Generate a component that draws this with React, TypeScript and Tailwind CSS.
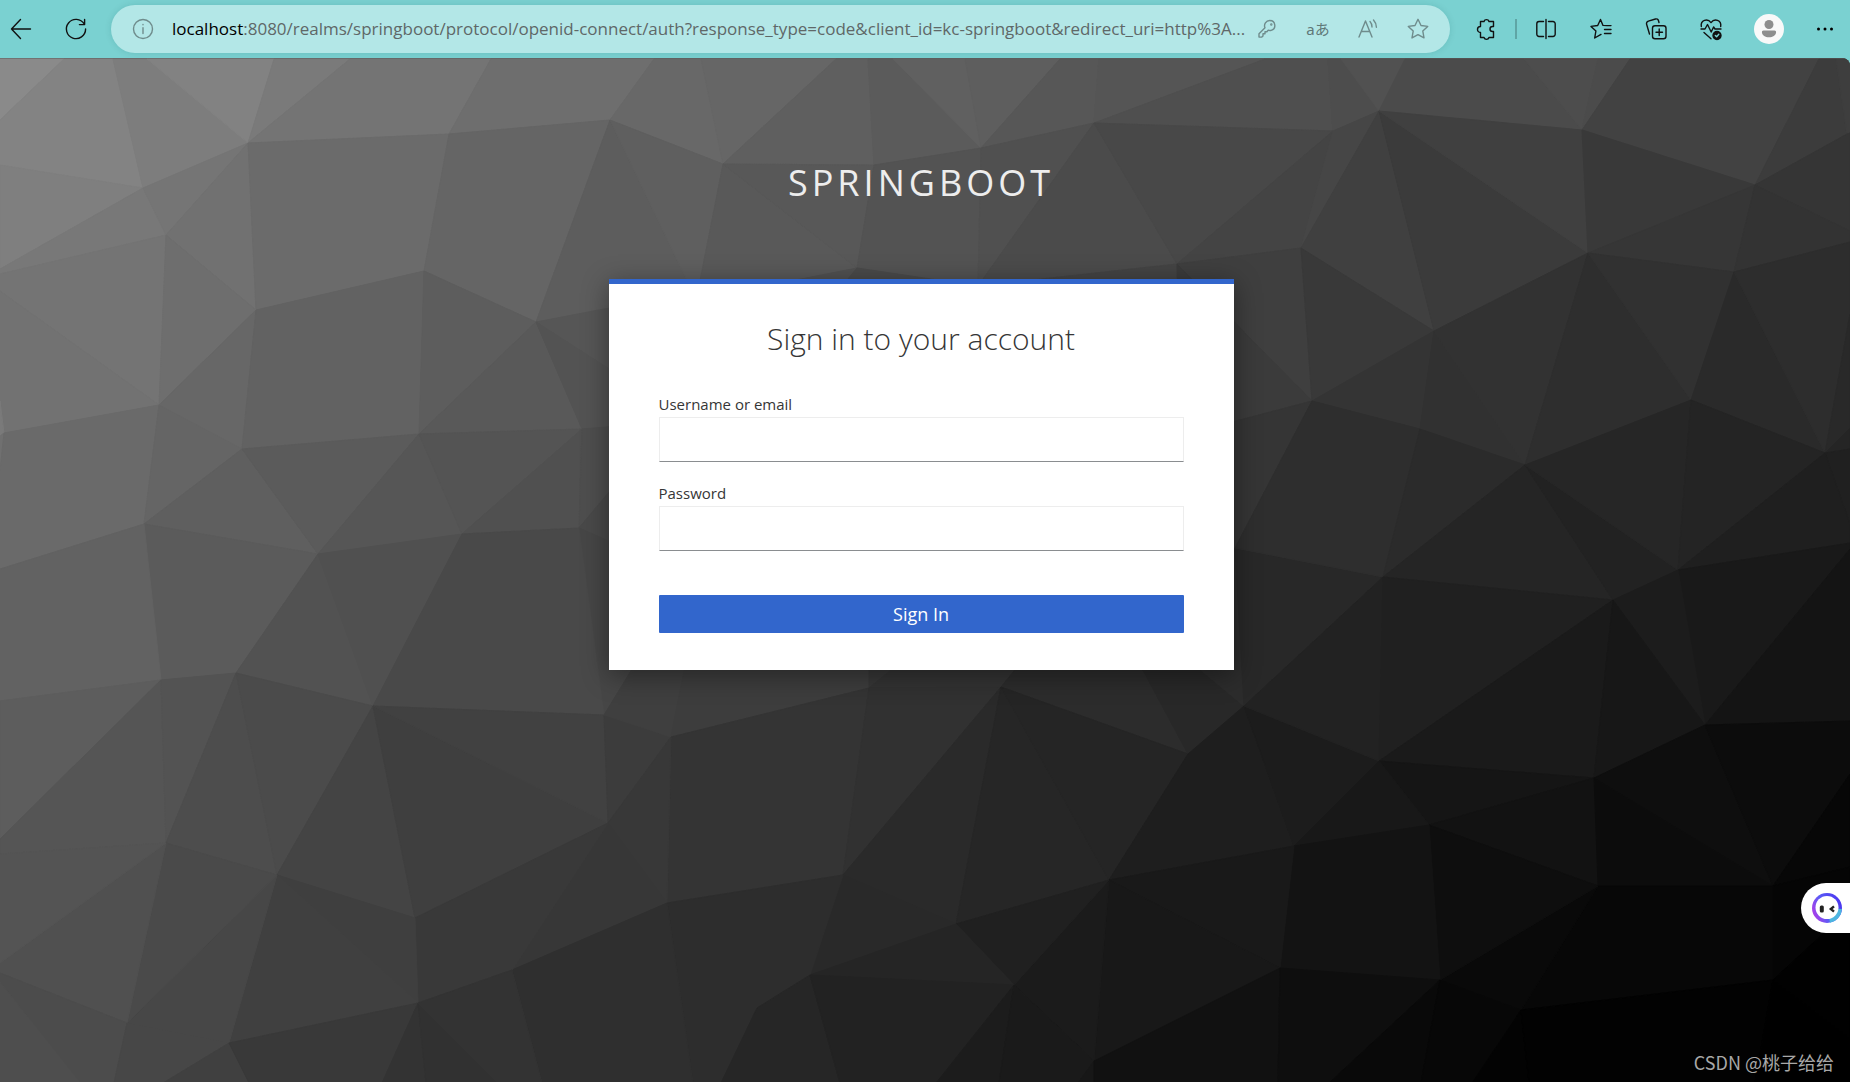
import { ReactNode } from "react";

// [fill, points] for every facet of the backdrop
const facets: [string, string][] = [
  ["#8a8a8a", "0,58 64,58 0,119"],
  ["#838383", "64,58 113,58 143,187 0,164 0,119"],
  ["#7d7d7d", "113,58 147,58 248,142 143,187"],
  ["#828282", "147,58 274,58 248,142"],
  ["#7a7a7a", "274,58 350,58 248,142"],
  ["#747474", "350,58 491,58 449,133 248,142"],
  ["#6e6e6e", "491,58 654,58 610,119 449,133"],
  ["#686868", "654,58 701,58 723,163 610,119"],
  ["#666666", "701,58 836,58 723,163"],
  ["#5f5f5f", "836,58 868,58 874,164 723,163"],
  ["#5b5b5b", "868,58 893,58 981,147 874,164"],
  ["#606060", "893,58 965,58 981,147"],
  ["#5e5e5e", "965,58 1060,58 981,147"],
  ["#575757", "1060,58 1099,58 1094,122 981,147"],
  ["#555555", "1099,58 1265,58 1094,122"],
  ["#4f4f4f", "1265,58 1328,58 1333,130 1094,122"],
  ["#4d4d4d", "1328,58 1341,58 1379,110 1333,130"],
  ["#515151", "1341,58 1405,58 1379,110"],
  ["#4b4b4b", "1405,58 1524,58 1582,129 1379,110"],
  ["#4d4d4d", "1524,58 1598,58 1582,129"],
  ["#4b4b4b", "1598,58 1630,58 1582,129"],
  ["#424242", "1630,58 1819,58 1755,184 1582,129"],
  ["#3c3c3c", "1819,58 1836,58 1847,133 1755,184"],
  ["#3e3e3e", "1836,58 1850,58 1850,132 1847,133"],
  ["#7f7f7f", "0,164 143,187 0,268"],
  ["#787878", "0,268 143,187 166,234 0,273"],
  ["#757575", "143,187 248,142 166,234"],
  ["#717171", "248,142 256,309 166,234"],
  ["#6b6b6b", "248,142 449,133 424,270 256,309"],
  ["#656565", "449,133 610,119 536,321 424,270"],
  ["#5d5d5d", "610,119 692,290 536,321"],
  ["#5f5f5f", "610,119 723,163 698,290 692,290"],
  ["#595959", "723,163 857,267 785,290 698,290"],
  ["#585858", "723,163 874,164 857,267"],
  ["#535353", "874,164 981,147 978,285 857,267"],
  ["#505050", "981,147 1094,122 978,285"],
  ["#4b4b4b", "1094,122 1177,263 978,285"],
  ["#484848", "1094,122 1333,130 1177,263"],
  ["#444444", "1333,130 1301,247 1177,263"],
  ["#464646", "1333,130 1379,110 1301,247"],
  ["#404040", "1379,110 1434,330 1301,247"],
  ["#3b3b3b", "1379,110 1588,252 1434,330"],
  ["#404040", "1379,110 1582,129 1588,252"],
  ["#393939", "1582,129 1755,184 1588,252"],
  ["#363636", "1755,184 1734,271 1588,252"],
  ["#353535", "1755,184 1847,133 1850,132 1850,230"],
  ["#333333", "1755,184 1850,230 1850,241 1734,271"],
  ["#747474", "0,273 166,234 159,404 0,290"],
  ["#727272", "0,290 159,404 4,432 0,400"],
  ["#6e6e6e", "166,234 256,309 159,404"],
  ["#676767", "256,309 242,448 159,404"],
  ["#626262", "256,309 424,270 419,433 242,448"],
  ["#5d5d5d", "424,270 536,321 419,433"],
  ["#595959", "536,321 582,428 419,433"],
  ["#565656", "536,321 620,305 620,375"],
  ["#535353", "536,321 620,375 620,425 582,428"],
  ["#515151", "770,284 857,267 838,290"],
  ["#4a4a4a", "838,290 857,267 978,285 978,295"],
  ["#444444", "978,285 1177,263 1179,295"],
  ["#3f3f3f", "1177,263 1301,247 1312,400"],
  ["#3b3b3b", "1177,263 1312,400 1179,435"],
  ["#393939", "1301,247 1434,330 1312,400"],
  ["#343434", "1434,330 1420,428 1312,400"],
  ["#313131", "1434,330 1525,464 1420,428"],
  ["#323232", "1434,330 1588,252 1525,464"],
  ["#2e2e2e", "1588,252 1691,399 1525,464"],
  ["#313131", "1588,252 1734,271 1691,399"],
  ["#2a2a2a", "1734,271 1825,452 1691,399"],
  ["#2d2d2d", "1734,271 1850,241 1850,313 1825,452"],
  ["#292929", "1850,313 1850,427 1825,452"],
  ["#252525", "1850,427 1850,448 1825,452"],
  ["#202020", "1825,452 1850,448 1850,523"],
  ["#7a7a7a", "0,400 4,432 0,435"],
  ["#707070", "0,435 4,432 0,470"],
  ["#6a6a6a", "4,432 159,404 144,523 0,568 0,470"],
  ["#656565", "159,404 242,448 144,523"],
  ["#5f5f5f", "242,448 318,553 144,523"],
  ["#5b5b5b", "242,448 419,433 318,553"],
  ["#565656", "419,433 462,533 318,553"],
  ["#545454", "419,433 582,428 462,533"],
  ["#505050", "582,428 579,527 462,533"],
  ["#4e4e4e", "582,428 620,425 620,478 579,527"],
  ["#494949", "579,527 620,478 620,545"],
  ["#464646", "579,527 620,545 637,670 604,714"],
  ["#5b5b5b", "144,523 318,553 236,672 161,679"],
  ["#626262", "0,568 144,523 161,679 0,700"],
  ["#525252", "318,553 373,705 236,672"],
  ["#505050", "318,553 462,533 373,705"],
  ["#494949", "462,533 579,527 604,714 373,705"],
  ["#353535", "1179,435 1312,400 1235,547 1179,560"],
  ["#5d5d5d", "0,700 161,679 0,838"],
  ["#555555", "161,679 166,842 0,853 0,838"],
  ["#535353", "161,679 236,672 166,842"],
  ["#4d4d4d", "236,672 277,874 166,842"],
  ["#4b4b4b", "236,672 373,705 277,874"],
  ["#444444", "373,705 415,917 277,874"],
  ["#3f3f3f", "373,705 608,822 415,917"],
  ["#414141", "373,705 604,714 608,822"],
  ["#3c3c3c", "604,714 671,736 608,822"],
  ["#3f3f3f", "604,714 637,660 686,660 671,736"],
  ["#3d3d3d", "671,736 686,660 869,660 869,687"],
  ["#373737", "869,660 902,660 869,687"],
  ["#333333", "902,660 1022,660 1001,686 869,687"],
  ["#2c2c2c", "1022,660 1138,660 1188,753 1001,686"],
  ["#282828", "1138,660 1190,660 1244,705 1188,753"],
  ["#2c2c2c", "1190,660 1235,547 1244,705"],
  ["#282828", "1235,547 1383,576 1244,705"],
  ["#2e2e2e", "1235,547 1312,400 1420,428 1383,576"],
  ["#2b2b2b", "1420,428 1525,464 1383,576"],
  ["#252525", "1525,464 1613,599 1383,576"],
  ["#222222", "1525,464 1678,569 1613,599"],
  ["#262626", "1525,464 1691,399 1678,569"],
  ["#242424", "1691,399 1825,452 1678,569"],
  ["#1f1f1f", "1825,452 1850,523 1850,542 1678,569"],
  ["#191919", "1678,569 1850,542 1850,548 1705,724"],
  ["#141414", "1850,548 1850,720 1705,724"],
  ["#1c1c1c", "1678,569 1705,724 1613,599"],
  ["#343434", "671,736 869,687 843,874 667,902"],
  ["#383838", "671,736 667,902 608,822"],
  ["#313131", "869,687 1001,686 843,874"],
  ["#2a2a2a", "1001,686 956,923 843,874"],
  ["#262626", "1001,686 1109,879 956,923"],
  ["#252525", "1001,686 1188,753 1109,879"],
  ["#1e1e1e", "1188,753 1244,705 1294,845 1109,879"],
  ["#1c1c1c", "1244,705 1379,760 1294,845"],
  ["#222222", "1244,705 1383,576 1379,760"],
  ["#202020", "1383,576 1613,599 1379,760"],
  ["#1a1a1a", "1613,599 1594,777 1379,760"],
  ["#171717", "1613,599 1705,724 1594,777"],
  ["#151515", "1379,760 1594,777 1429,824"],
  ["#181818", "1379,760 1429,824 1294,845"],
  ["#121212", "1594,777 1598,885 1429,824"],
  ["#0e0e0e", "1705,724 1773,885 1594,777"],
  ["#0c0c0c", "1594,777 1773,885 1598,885"],
  ["#0c0c0c", "1705,724 1850,720 1850,773 1773,885"],
  ["#070707", "1850,773 1850,866 1773,885"],
  ["#050505", "1773,885 1850,866 1850,908 1773,979"],
  ["#070707", "1598,885 1773,885 1773,979 1521,1009"],
  ["#090909", "1598,885 1521,1009 1440,979"],
  ["#0e0e0e", "1429,824 1598,885 1440,979"],
  ["#131313", "1294,845 1429,824 1440,979 1280,967"],
  ["#191919", "1109,879 1294,845 1280,967"],
  ["#181818", "1109,879 1280,967 1094,1060"],
  ["#1b1b1b", "1109,879 1094,1060 1014,984"],
  ["#202020", "956,923 1109,879 1014,984"],
  ["#292929", "843,874 956,923 810,974"],
  ["#252525", "956,923 1014,984 810,974"],
  ["#2d2d2d", "667,902 843,874 810,974 757,1007 721,1082 693,1082"],
  ["#373737", "608,822 667,902 512,969"],
  ["#2f2f2f", "512,969 667,902 693,1082 542,1082"],
  ["#393939", "608,822 512,969 418,1002 415,917"],
  ["#3f3f3f", "277,874 415,917 418,1002"],
  ["#404040", "277,874 418,1002 229,1042"],
  ["#474747", "277,874 229,1042 127,1022"],
  ["#4a4a4a", "166,842 277,874 127,1022"],
  ["#505050", "166,842 127,1022 0,972 0,962"],
  ["#545454", "0,853 166,842 0,962"],
  ["#4c4c4c", "0,972 127,1022 114,1082 80,1082 0,981"],
  ["#4e4e4e", "0,981 80,1082 0,1082"],
  ["#474747", "127,1022 229,1042 163,1082 114,1082"],
  ["#404040", "229,1042 249,1082 163,1082"],
  ["#393939", "229,1042 418,1002 382,1082 249,1082"],
  ["#333333", "418,1002 426,1082 382,1082"],
  ["#313131", "418,1002 498,1082 426,1082"],
  ["#333333", "418,1002 512,969 542,1082 498,1082"],
  ["#262626", "757,1007 810,974 840,1082 721,1082"],
  ["#222222", "810,974 1014,984 936,1082 840,1082"],
  ["#1c1c1c", "1014,984 999,1082 936,1082"],
  ["#1a1a1a", "1014,984 1094,1060 1078,1082 999,1082"],
  ["#171717", "1094,1060 1094,1082 1078,1082"],
  ["#111111", "1094,1060 1280,967 1278,1082 1094,1082"],
  ["#0e0e0e", "1280,967 1440,979 1329,1082 1278,1082"],
  ["#090909", "1440,979 1421,1082 1329,1082"],
  ["#070707", "1440,979 1521,1009 1472,1082 1421,1082"],
  ["#030303", "1521,1009 1529,1082 1472,1082"],
  ["#020202", "1521,1009 1773,979 1755,1082 1529,1082"],
  ["#000000", "1773,979 1850,1037 1850,1082 1755,1082"],
  ["#010101", "1773,979 1850,908 1850,1037"],
];

function Backdrop() {
  return (
    <svg
      className="absolute inset-0 h-full w-full"
      viewBox="0 57 1850 1024"
      preserveAspectRatio="xMidYMid slice"
      aria-hidden="true"
    >
      <rect x="0" y="57" width="1850" height="1024" fill="#5a5a5a" />
      {facets.map(([fill, points]) => (
        <polygon key={points} points={points} fill={fill} stroke={fill} />
      ))}
    </svg>
  );
}

interface ToolProps {
  label: string;
  className: string;
  children: ReactNode;
}

function Tool({ label, className, children }: ToolProps) {
  return (
    <button
      type="button"
      aria-label={label}
      className={`flex h-10 shrink-0 items-center justify-center ${className}`}
    >
      {children}
    </button>
  );
}

function Icon({ children }: { children: ReactNode }) {
  return (
    <svg
      width="24"
      height="24"
      viewBox="0 0 24 24"
      fill="none"
      stroke="currentColor"
      strokeWidth="1.4"
      strokeLinecap="round"
      strokeLinejoin="round"
      aria-hidden="true"
    >
      {children}
    </svg>
  );
}

function Toolbar() {
  return (
    <header className="flex h-[58px] items-center text-[#111]">
      <Tool label="Back" className="w-[42px]">
        <Icon>
          <path d="M21.5 12H2.5M11.5 2.5L2.5 12l9 9.5" />
        </Icon>
      </Tool>
      <Tool label="Refresh" className="mr-0.5 w-[67px]">
        <Icon>
          <path d="M20.2 7A9.6 9.6 0 1 0 21.6 12M20.6 2.500V7.600H15.4" />
        </Icon>
      </Tool>

      <div className="flex h-12 min-w-0 flex-1 items-center rounded-full bg-[#b3e7e7] pr-[7px] pl-5 text-[#6f8c8c] shadow-[0_0_6px_rgba(0,80,80,0.15)]">
        <Tool label="View site information" className="mr-[17px]">
          <Icon>
            <circle cx="12" cy="12" r="9.5" />
            <path d="M12 10.8V16.5M12 7.5V7.8" />
          </Icon>
        </Tool>
        <p className="min-w-0 flex-1 truncate font-['Open_Sans',sans-serif] text-[17px] text-[#5f6868]">
          <span className="text-black">localhost</span>
          :8080/realms/springboot/protocol/openid-connect/auth?response_type=code&amp;client_id=kc-springboot&amp;redirect_uri=http%3A...
        </p>
        <Tool label="Saved passwords" className="mr-2 w-9">
          <Icon>
            <path d="M14.8 3.5a5 5 0 0 1 1.400 9.800c-1 .3-2 .3-3-.1l-1.300 1.500H10v2.100H8v2.100l-1.200 1.200H4v-3.300l6-6A5.200 5.200 0 0 1 14.800 3.500z" />
            <circle cx="16.3" cy="7.5" r="0.5" />
          </Icon>
        </Tool>
        <Tool label="Translate" className="w-[50px]">
          <span className="font-['Noto_Sans','Noto_Sans_CJK_JP',sans-serif] text-[15px] text-[#5f7878]">
            aあ
          </span>
        </Tool>
        <Tool label="Read aloud" className="w-[50px]">
          <Icon>
            <path d="M3 20L9.5 4L16 20M5.2 14.500H13.8M14 4.500c1.300 1.400 2 3.300 2 5.500M17.500 3c1.800 2 2.900 4.400 2.900 7.200" />
          </Icon>
        </Tool>
        <Tool label="Add to favorites" className="w-[50px]">
          <Icon>
            <path d="M12 2.300l3 6.200 6.700.9-4.900 4.700 1.200 6.800-6-3.300-6 3.300 1.200-6.800-4.900-4.700 6.700-.9z" />
          </Icon>
        </Tool>
      </div>

      <div className="flex items-center pl-2">
        <Tool label="Extensions" className="w-14">
          <Icon>
            <path d="M6.500 4.500H10a2.600 2.600 0 0 1 5 0h4.500v5h-1a2.500 2.500 0 0 0 0 5h1v6H15a2.600 2.600 0 0 1-5 0H6.500v-5a3 3 0 0 1 0-6z" />
          </Icon>
        </Tool>
        <div className="mx-px h-5 w-0.5 bg-[#5fa5a5]" />
        <Tool label="Split screen" className="w-[55px]">
          <Icon>
            <path d="M9.500 4.500H5a2.200 2.200 0 0 0-2.200 2.200v10.600A2.200 2.200 0 0 0 5 19.500h4.500M14.500 4.500H19a2.200 2.200 0 0 1 2.200 2.200v10.600a2.200 2.200 0 0 1-2.200 2.200h-4.500M12 2.500v19" />
          </Icon>
        </Tool>
        <Tool label="Favorites" className="w-[55px]">
          <Icon>
            <path d="M18 8.600L14 8.400L11.500 2.500L8.700 8.500L2 9.400L6.900 14L5.700 21L12 17.400M15.500 12.500H22M14.500 8.600H22M15.500 16.500H22" />
          </Icon>
        </Tool>
        <Tool label="Collections" className="w-[55px]">
          <Icon>
            <rect x="8.500" y="8.700" width="13.500" height="13" rx="2.500" />
            <path d="M15.200 12v6.500M12 15.200h6.500M5.500 17L2.600 7.200a2.400 2.400 0 0 1 1.700-3L11.500 2a2.400 2.400 0 0 1 3 1.700l.5 1.800" />
          </Icon>
        </Tool>
        <Tool label="Browser essentials" className="w-[55px]">
          <Icon>
            <path d="M2.300 9.500C1.300 3 8.500 1 12 5.600C15.500 1 22.700 3 21.700 9.500M2 12h4l2.500-4.500L12.200 15l2.400-5 1.400 2h6M5 15.500l7 6.300" />
            <circle cx="18" cy="18.500" r="4" fill="currentColor" />
            <path d="M16.300 18.500l1.300 1.300 2.200-2.500" stroke="#7ad1d1" />
          </Icon>
        </Tool>
        <Tool label="Profile" className="w-[62px]">
          <svg width="30" height="30" viewBox="0 0 30 30" aria-hidden="true">
            <circle cx="15" cy="15" r="15" fill="#f9f9f9" />
            <circle cx="15" cy="10.500" r="4.500" fill="#8e8e8e" />
            <path
              d="M9.500 16.500h11a1.600 1.600 0 0 1 1.600 1.800c-.4 3.400-3.300 5-7.100 5s-6.700-1.600-7.100-5a1.600 1.600 0 0 1 1.600-1.800z"
              fill="#8e8e8e"
            />
          </svg>
        </Tool>
        <Tool label="Settings and more" className="w-[50px]">
          <svg width="24" height="24" viewBox="0 0 24 24" aria-hidden="true">
            <circle cx="5.500" cy="12" r="1.500" />
            <circle cx="12" cy="12" r="1.500" />
            <circle cx="18.500" cy="12" r="1.500" />
          </svg>
        </Tool>
      </div>
    </header>
  );
}

interface FieldProps {
  id: string;
  label: string;
  type: string;
}

function Field({ id, label, type }: FieldProps) {
  return (
    <div className="flex flex-col">
      <label
        htmlFor={id}
        className="text-[15px] leading-[26px] text-[#363636]"
      >
        {label}
      </label>
      <input
        id={id}
        name={id}
        type={type}
        className="h-[45px] w-full border border-[#ededed] border-b-[#8a8d90] bg-white px-2.5 text-base outline-none"
      />
    </div>
  );
}

function LoginCard() {
  return (
    <section className="w-[625px] max-w-full border-t-[5px] border-[#3266cc] bg-white px-[50px] pt-[31px] pb-[37px] shadow-[0_5px_25px_rgba(3,3,3,0.4)]">
      <h2 className="text-center text-[30px] leading-12 font-light text-[#363636]">
        Sign in to your account
      </h2>
      <form
        className="mt-7 flex flex-col gap-[18px]"
        onSubmit={(e) => e.preventDefault()}
      >
        <Field id="username" label="Username or email" type="text" />
        <Field id="password" label="Password" type="password" />
        <button
          type="submit"
          className="mt-[26px] h-[38px] w-full rounded-[1px] bg-[#3266cc] text-[18px] text-white"
        >
          Sign In
        </button>
      </form>
    </section>
  );
}

function AssistantBubble() {
  return (
    <button
      type="button"
      aria-label="Open assistant"
      className="absolute right-0 bottom-[149px] flex h-[50px] w-[49px] items-center rounded-l-full bg-white pl-2.5"
    >
      <svg width="32" height="32" viewBox="0 0 32 32" aria-hidden="true">
        <defs>
          <linearGradient id="ring" x1="0" y1="0.7" x2="1" y2="0.3">
            <stop offset="0" stopColor="#b13be8" />
            <stop offset="0.4" stopColor="#5b5cf6" />
            <stop offset="1" stopColor="#4a35f0" />
          </linearGradient>
        </defs>
        <circle cx="16" cy="16" r="15" fill="url(#ring)" />
        <path d="M31 17A15 15 0 0 1 19 30.700L16 16z" fill="#4cb5e0" />
        <circle cx="16" cy="15.500" r="11.500" fill="#fff" />
        <rect x="8.800" y="13.500" width="4" height="7" rx="1.500" fill="#222" />
        <path
          d="M23 14.300L19.800 17l3.200 2.700"
          fill="none"
          stroke="#222"
          strokeWidth="2.400"
        />
      </svg>
    </button>
  );
}

function App() {
  return (
    <div className="flex min-h-screen flex-col bg-[#7ad1d1] font-['Open_Sans',sans-serif]">
      <Toolbar />
      <main className="relative flex flex-1 flex-col items-center overflow-hidden rounded-tr-lg bg-[#3a3a3a] pr-2">
        <Backdrop />
        <h1 className="relative pt-[100px] pb-[71px] text-[36px] leading-[50px] tracking-[4px] text-[#ededed] uppercase">
          springboot
        </h1>
        <div className="relative flex w-full justify-center">
          <LoginCard />
        </div>
        <AssistantBubble />
        <p className="absolute right-4 bottom-2 font-['Noto_Sans_CJK_SC',sans-serif] text-[18px] leading-6 text-[#a8a8a8]">
          CSDN @桃子给给
        </p>
      </main>
    </div>
  );
}
export default App;
